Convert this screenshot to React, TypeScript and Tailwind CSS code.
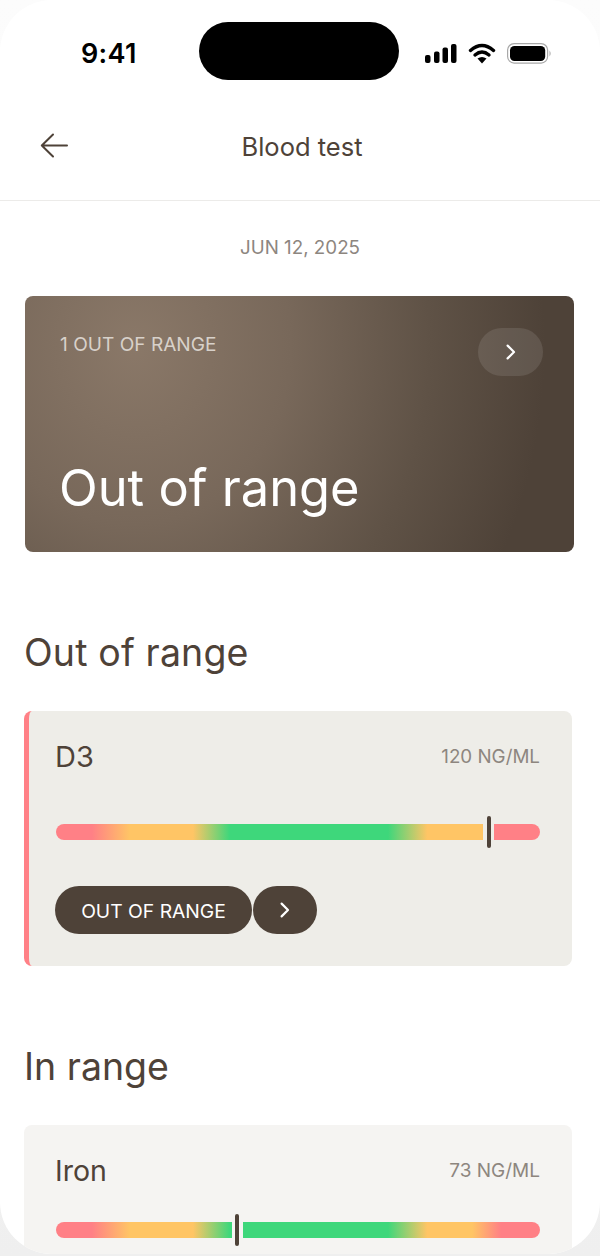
import React from "react";

const Chevron = ({ className = "" }: { className?: string }) => (
  <svg width="16" height="18" viewBox="0 0 16 18" fill="none" className={className}>
    <path d="M4.6 2.6 L11 9 L4.6 15.4" stroke="currentColor" strokeWidth="2.2" strokeLinecap="round" strokeLinejoin="round" />
  </svg>
);

function Bar({ left, gradient }: { left: string; gradient: string }) {
  return (
    <div className="relative h-4 w-[484px]">
      <div className="h-4 w-full rounded-full" style={{ background: gradient }} />
      <div className="absolute top-0 h-4 w-[11px] bg-[var(--gapbg)]" style={{ left }} />
      <div className="absolute top-[-8px] flex h-8 w-[11px] justify-center" style={{ left }}>
        <div className="h-8 w-1 rounded-full bg-[#4e4238]" />
      </div>
    </div>
  );
}

export default function App() {
  return (
    <div className="relative h-[1256px] w-[600px] overflow-hidden bg-gradient-to-b from-[#fcfcfc] via-[#f8f8f8] to-[#efefef] font-['Inter',sans-serif] text-[#4e4238]">
      <div className="flex h-[1254px] w-full flex-col overflow-hidden rounded-[52px] bg-white">
        <div className="relative flex h-[102px] shrink-0 items-start">
          <div className="absolute left-[81px] top-[38px] text-[27px] font-semibold leading-8 tracking-[0.3px] text-black">9:41</div>
          <div className="absolute left-[199px] top-[22px] h-[58px] w-[200px] rounded-full bg-black" />
          <div className="absolute left-[425px] top-[43px]">
            <svg width="128" height="22" viewBox="0 0 128 22" fill="none">
              <rect x="0" y="12" width="5.5" height="8" rx="2" fill="#000" />
              <rect x="9" y="8.5" width="5.5" height="11.5" rx="2" fill="#000" />
              <rect x="17.5" y="4.5" width="5.5" height="15.5" rx="2" fill="#000" />
              <rect x="26" y="1" width="5.5" height="19" rx="2" fill="#000" />
              <path d="M45.5 7.5 Q57 -2.5 68.5 7.5" stroke="#000" strokeWidth="3.4" strokeLinecap="round" fill="none" />
              <path d="M50 12 Q57 6 64 12" stroke="#000" strokeWidth="3.4" strokeLinecap="round" fill="none" />
              <path d="M52.5 15.5 L57 20.5 L61.5 15.5 Q57 12.5 52.5 15.5Z" fill="#000" />
              <rect x="82.6" y="0.6" width="40" height="19.5" rx="6.5" stroke="#a8a8a8" strokeWidth="1.2" fill="none" />
              <rect x="85" y="3" width="35.2" height="15" rx="4.5" fill="#000" />
              <path d="M124.5 7.5 Q126.8 10.3 124.5 13.5 Z" fill="#a8a8a8" />
            </svg>
          </div>
        </div>

        <div className="relative flex h-[99px] shrink-0 items-center justify-center border-b border-[#ecebe9] pb-[9px]">
          <svg className="absolute left-[39px] top-[31px]" width="30" height="26" viewBox="0 0 30 26" fill="none">
            <path d="M14 1.5 L2.8 12.5 L14 23.5 M2.8 12.5 H28" stroke="#4e4238" strokeWidth="2" strokeLinecap="round" strokeLinejoin="round" />
          </svg>
          <div className="ml-1 text-[25.5px] leading-8">Blood test</div>
        </div>

        <div className="flex flex-col px-6 pt-[35px]">
          <div className="text-center text-[18.8px] leading-6 text-[#8d867f]">JUN 12, 2025</div>

          <div className="mt-[36px] ml-[1px] flex h-[256px] w-[549px] flex-col justify-between rounded-lg bg-[radial-gradient(ellipse_410px_470px_at_110px_50px,#8a7868_0%,#78685a_38%,#5f5246_72%,#4e4238_100%)] pl-[34px] pr-[31px] pt-8 pb-8">
            <div className="flex items-start justify-between">
              <div className="ml-px mt-1 text-[19.1px] leading-6 text-[#d8d1ca]">1 OUT OF RANGE</div>
              <div className="flex h-12 w-[65px] items-center justify-center rounded-full bg-white/10 text-white">
                <Chevron />
              </div>
            </div>
            <div className="text-[50.6px] leading-[64px] text-white">Out of range</div>
          </div>

          <h2 className="mt-[75px] text-[37.5px] font-normal leading-[52px] tracking-[0.15px]">Out of range</h2>

          <div className="mt-[32px] flex h-[255px] w-[548px] flex-col rounded-lg border-l-[5px] border-[#ff8086] bg-[#eeede8] pl-[27px] pr-8 pt-[26px] [--gapbg:#eeede8]">
            <div className="flex items-center justify-between">
              <div className="ml-[-1px] text-[29px] leading-10">D3</div>
              <div className="text-[18.8px] leading-6 text-[#8d867f]">120 NG/ML</div>
            </div>
            <div className="mt-[47px]">
              <Bar
                left="427px"
                gradient="linear-gradient(90deg,#ff8086 0%,#ff8086 7.4%,#ffc565 15.3%,#ffc565 28.3%,#3ed77b 35.9%,#3ed77b 68.6%,#ffc565 76.7%,#ffc565 89%,#ff8086 89%,#ff8086 100%)"
              />
            </div>
            <div className="mt-[46px] ml-[-1px] flex gap-px">
              <div className="flex h-12 w-[197px] items-center justify-center rounded-full bg-[#4e4238] pt-[2px] text-[19.3px] text-white">OUT OF RANGE</div>
              <div className="flex h-12 w-[64px] items-center justify-center rounded-full bg-[#4e4238] text-white">
                <Chevron />
              </div>
            </div>
          </div>

          <h2 className="mt-[75px] text-[37.5px] font-normal leading-[52px]">In range</h2>

          <div className="mt-[32px] flex h-[200px] w-[548px] shrink-0 flex-col rounded-lg bg-[#f5f4f2] pl-8 pr-8 pt-[26px] [--gapbg:#f5f4f2]">
            <div className="flex items-center justify-between">
              <div className="ml-[-1px] text-[28.5px] leading-10">Iron</div>
              <div className="text-[19px] leading-6 text-[#8d867f]">73 NG/ML</div>
            </div>
            <div className="mt-[31px]">
              <Bar
                left="175.5px"
                gradient="linear-gradient(90deg,#ff8086 0%,#ff8086 7.4%,#ffc565 15.3%,#ffc565 28.3%,#3ed77b 35.9%,#3ed77b 68.6%,#ffc565 76.7%,#ffc565 86%,#ff8086 92%,#ff8086 100%)"
              />
            </div>
          </div>
        </div>
      </div>
    </div>
  );
}
